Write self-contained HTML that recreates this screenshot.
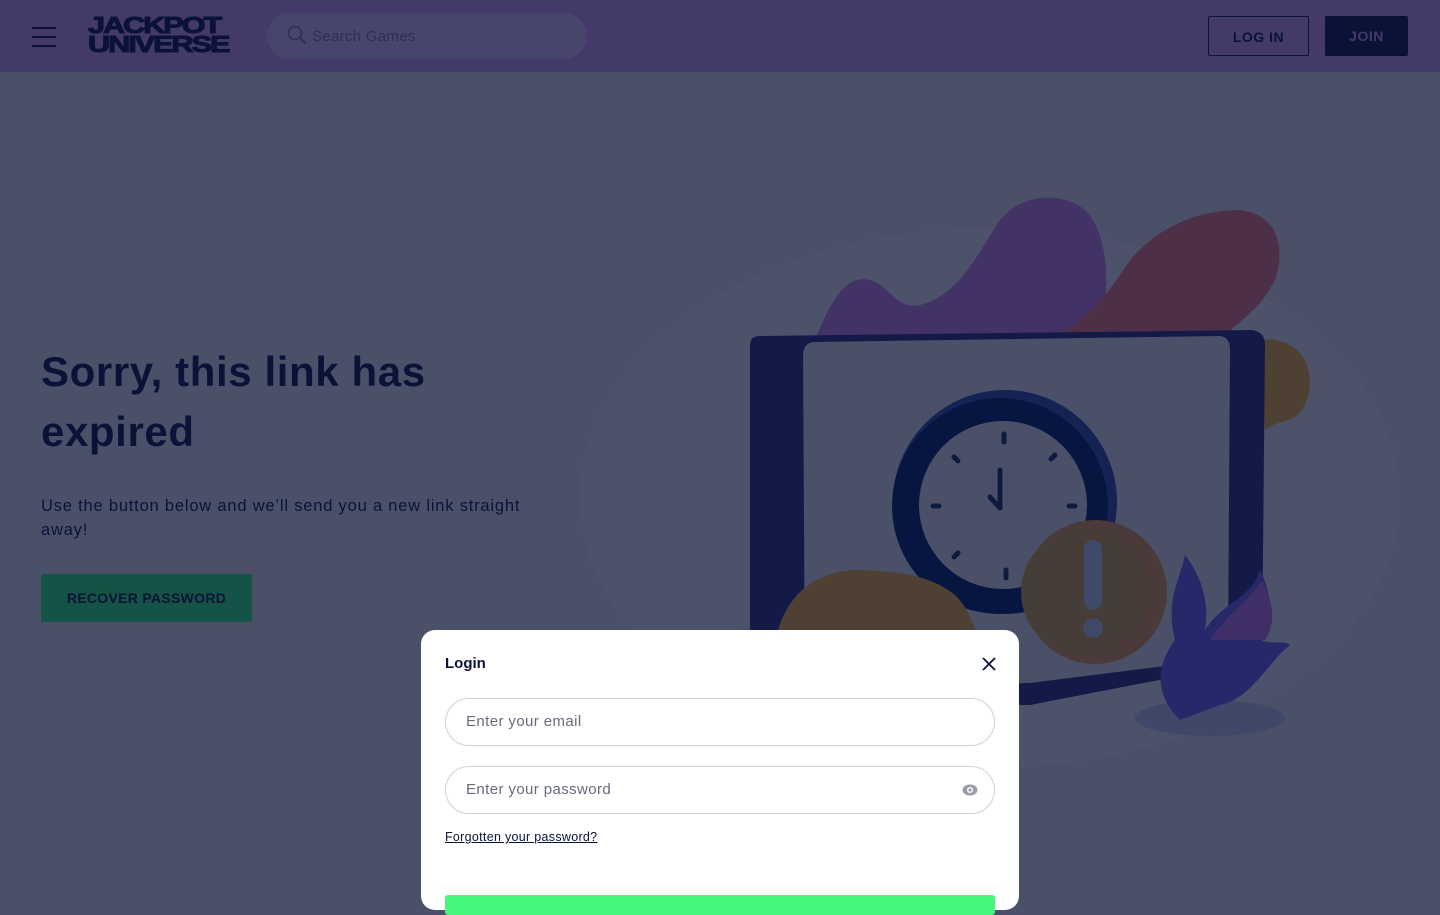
<!DOCTYPE html>
<html><head><meta charset="utf-8"><style>
*{margin:0;padding:0;box-sizing:border-box}
body{width:1440px;height:900px;overflow:hidden;background:#4b5069;font-family:"Liberation Sans",sans-serif;position:relative}
.hdr{position:absolute;left:0;top:0;width:1440px;height:72px;background:#433a69}
.burger{position:absolute;left:32px;top:27px;width:24px}
.burger i{display:block;height:2px;background:#0a1238;margin-bottom:7px}
.logo{position:absolute;left:88px;top:16px;font-weight:900;color:#0a1238;font-size:23px;line-height:19px;letter-spacing:-1.5px;transform:scaleX(1.33);transform-origin:left;-webkit-text-stroke:1px #0a1238}
.search{position:absolute;left:267px;top:13px;width:320px;height:46px;border-radius:23px;background:#48456d;color:#2b3055;font-size:15px;padding:15px 0 0 45px;letter-spacing:.3px}
.btn{position:absolute;top:16px;height:40px;font-weight:bold;font-size:14px;color:#0a1238;text-align:center;line-height:40px;border-radius:2px;letter-spacing:.5px}
h1{position:absolute;left:41px;top:342px;font-size:42px;line-height:60px;color:#0a1238;font-weight:bold;width:480px;letter-spacing:.6px}
.p{position:absolute;left:41px;top:494px;width:500px;font-size:16.5px;line-height:24px;color:#0a1238;letter-spacing:.8px}
.rec{position:absolute;left:41px;top:574px;width:211px;height:48px;background:#145346;color:#0a1238;font-weight:bold;font-size:14px;text-align:center;line-height:48px;border-radius:2px;letter-spacing:.3px}
.modal{position:absolute;left:421px;top:630px;width:598px;height:280px;background:#fff;border-radius:14px}
.modal .t{position:absolute;left:24px;top:25px;font-weight:bold;font-size:15px;color:#0a1238}
.inp{position:absolute;left:24px;width:550px;height:48px;border:1px solid #cfd0da;border-radius:24px;font-size:15px;color:#666a7e;padding:14px 0 0 20px;letter-spacing:.4px}
.fg{position:absolute;left:24px;top:200px;font-size:12.5px;color:#0a1238;text-decoration:underline;letter-spacing:.3px}
.go{position:absolute;left:24px;top:265px;width:550px;height:20px;background:#45f57c;border-radius:3px}
</style></head><body>
<div class="hdr">
 <div class="burger"><i></i><i></i><i></i></div>
 <div class="logo">JACKPOT<br>UNIVERSE</div>
 <div class="search"><svg style="position:absolute;left:20px;top:12px" width="20" height="20" viewBox="0 0 20 20"><circle cx="8" cy="8" r="6.5" fill="none" stroke="#2b3055" stroke-width="1.5"/><path d="M12.5 12.5l6 6" stroke="#2b3055" stroke-width="2"/></svg>Search Games</div>
 <div class="btn" style="left:1208px;width:101px;border:1px solid #0a1238">LOG IN</div>
 <div class="btn" style="left:1325px;width:83px;background:#0a1238;color:#433a69">JOIN</div>
</div>
<svg style="position:absolute;left:0;top:72px" width="1440" height="828" viewBox="0 72 1440 828">
 <ellipse cx="990" cy="498" rx="410" ry="270" fill="#4d526b"/>
 <path d="M815 340 C835 290 850 275 870 280 C890 285 895 310 920 305 C960 295 980 250 1000 220 C1020 195 1060 190 1085 210 C1110 235 1110 290 1100 340Z" fill="#433266"/>
 <path d="M1050 340 C1090 320 1110 290 1130 260 C1160 225 1200 210 1240 210 C1280 215 1285 250 1275 280 C1260 310 1240 320 1220 340Z" fill="#4d3048"/>
 <path d="M1260 340 C1300 335 1320 370 1305 405 C1295 425 1280 418 1265 430Z" fill="#4e4033"/>
 <ellipse cx="1210" cy="718" rx="75" ry="18" fill="#3f4868"/>
 <path d="M750 345 Q750 336 760 336 L1252 330 Q1265 332 1265 345 L1262 660 L1030 705 L750 705Z" fill="#131a48"/>
 <path d="M803 356 Q803 342 815 342 L1220 336 Q1230 337 1230 350 L1228 658 L1030 683 L805 690Z" fill="#4a5068"/>
 <circle cx="1005" cy="502" r="112" fill="#142353"/>
 <circle cx="1000" cy="506" r="108" fill="#071640"/>
 <circle cx="1003" cy="505" r="84" fill="#4a5068"/>
 <path d="M1000 470 L1000 508 L990 497" stroke="#0c1b3e" stroke-width="5" fill="none" stroke-linecap="round" stroke-linejoin="round"/>
 <g stroke="#0c1b3e" stroke-width="5" stroke-linecap="round"><path d="M1004 434v8M1006 570v8M933 506h6M1069 506h6M954 457l4 4M1055 455l-4 4M954 557l4-4"/></g>
 <circle cx="1095" cy="592" r="72" fill="#4a3a3a"/>
 <circle cx="1085" cy="592" r="64" fill="#463c38"/>
 <rect x="1084" y="540" width="18" height="70" rx="9" fill="#3f4a68"/>
 <circle cx="1093" cy="628" r="10" fill="#3f4a68"/>
 <path d="M778 630 C790 590 820 570 860 570 C900 572 930 575 955 595 C965 605 970 615 975 630Z" fill="#4e4033"/>
 <path d="M1180 720 C1150 690 1160 660 1175 640 C1165 600 1180 580 1185 555 C1200 575 1210 600 1205 630 C1225 600 1250 600 1260 570 C1275 600 1270 620 1260 640 C1275 645 1285 640 1290 645 C1270 660 1250 700 1220 705Z" fill="#26286a"/>
 <path d="M1210 640 C1230 610 1250 600 1262 580 C1275 605 1275 625 1265 640Z" fill="#3f2f66"/>
</svg>
<h1>Sorry, this link has expired</h1>
<div class="p">Use the button below and we’ll send you a new link straight away!</div>
<div class="rec">RECOVER PASSWORD</div>
<div class="modal">
 <div class="t">Login</div>
 <svg style="position:absolute;left:561px;top:27px" width="14" height="14" viewBox="0 0 14 14"><path d="M1 1l12 12M13 1L1 13" stroke="#0a1238" stroke-width="1.8"/></svg>
 <div class="inp" style="top:68px">Enter your email</div>
 <div class="inp" style="top:136px">Enter your password
  <svg style="position:absolute;right:16px;top:17px" width="16" height="12" viewBox="0 0 16 12"><ellipse cx="8" cy="6" rx="7.5" ry="5.5" fill="#9a9caa"/><circle cx="8" cy="6" r="3" fill="#fff"/><circle cx="8" cy="6" r="1.6" fill="#9a9caa"/></svg></div>
 <div class="fg">Forgotten your password?</div>
 <div class="go"></div>
</div>
</body></html>
